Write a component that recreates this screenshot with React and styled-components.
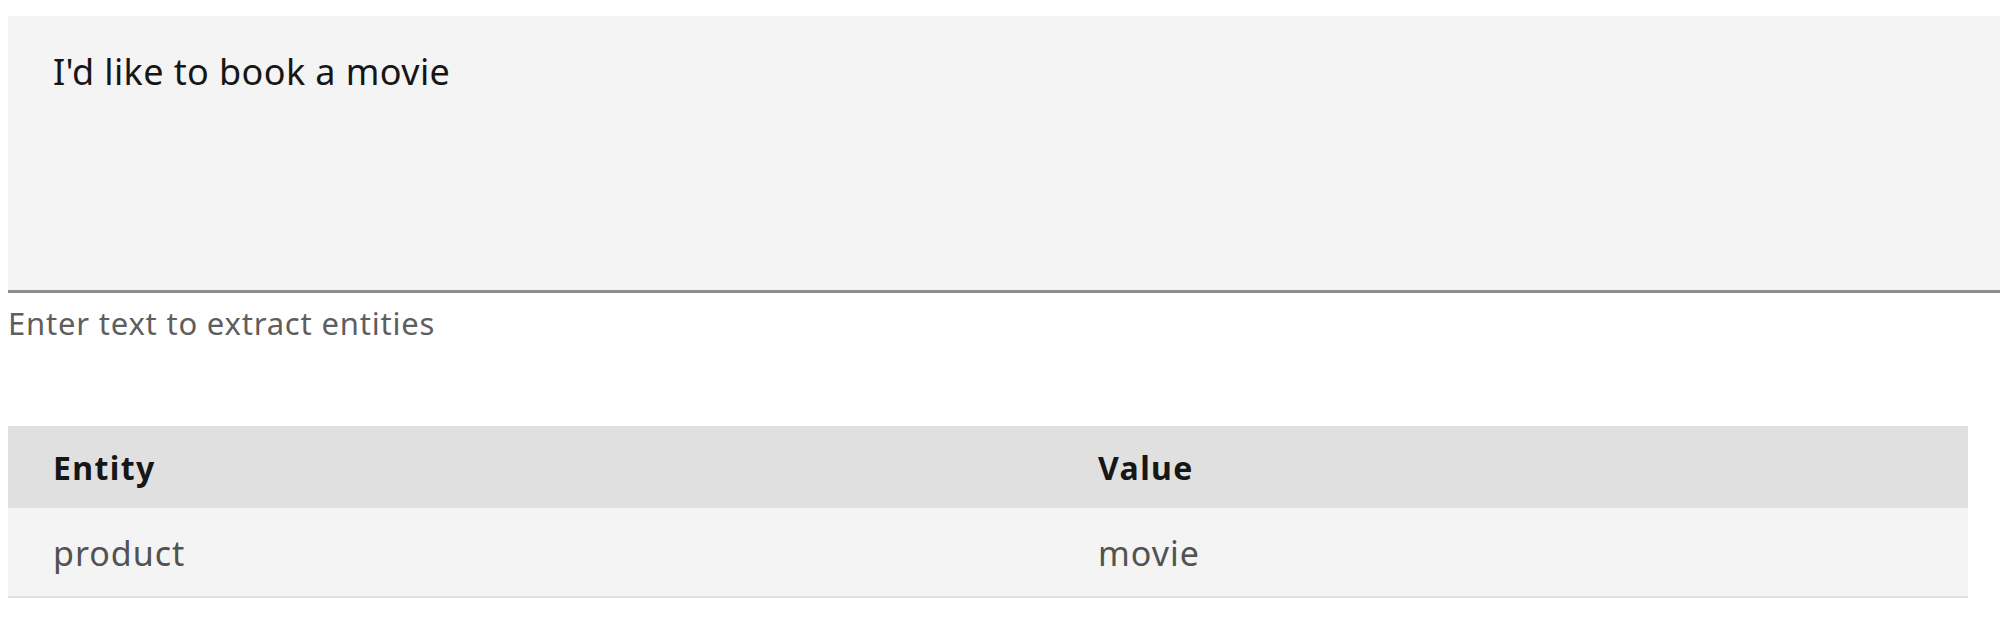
import styled, { createGlobalStyle } from "styled-components";

const GlobalStyle = createGlobalStyle`
  html, body {
    margin: 0;
    background: #ffffff;
    font-family: "Noto Sans", "Open Sans", sans-serif;
    overflow: hidden;
  }
`;

const Page = styled.div`
  padding: 16px 0 0 8px;
`;

const FieldWrapper = styled.div`
  display: flex;
  flex-direction: column;
`;

const TextArea = styled.textarea`
  box-sizing: border-box;
  width: 100%;
  height: 277px;
  margin: 0;
  padding: 34px 45px;
  border: none;
  border-bottom: 3px solid #8d8d8d;
  background: #f4f4f4;
  color: #161616;
  font-family: inherit;
  font-size: 36px;
  line-height: 44px;
  letter-spacing: 0.4px;
  resize: none;
  outline: none;
`;

const Helper = styled.div`
  margin-top: 12px;
  color: #5e5e5e;
  font-size: 31px;
  line-height: 36px;
  letter-spacing: 0.8px;
`;

const Table = styled.table`
  margin-top: 85px;
  width: 1960px;
  border-collapse: collapse;
`;

const HeadCell = styled.th`
  height: 82px;
  padding: 0 45px;
  background: #e0e0e0;
  color: #161616;
  text-align: left;
  font-size: 32px;
  font-weight: 700;
  letter-spacing: 1.4px;
  width: ${(props) => props.$width || "auto"};
`;

const Row = styled.tr`
  background: #f4f4f4;
  border-bottom: 2px solid #e0e0e0;
`;

const Cell = styled.td`
  height: 86px;
  padding: 2px 45px 0;
  color: #525252;
  font-size: 34px;
  letter-spacing: 1px;
`;

const rows = [{ entity: "product", value: "movie" }];

const App = () => {
  return (
    <Page>
      <GlobalStyle />
      <FieldWrapper>
        <TextArea defaultValue="I'd like to book a movie" />
        <Helper>Enter text to extract entities</Helper>
      </FieldWrapper>
      <Table>
        <thead>
          <tr>
            <HeadCell $width="955px">Entity</HeadCell>
            <HeadCell>Value</HeadCell>
          </tr>
        </thead>
        <tbody>
          {rows.map((r) => (
            <Row key={r.entity}>
              <Cell>{r.entity}</Cell>
              <Cell>{r.value}</Cell>
            </Row>
          ))}
        </tbody>
      </Table>
    </Page>
  );
};

export default App;
